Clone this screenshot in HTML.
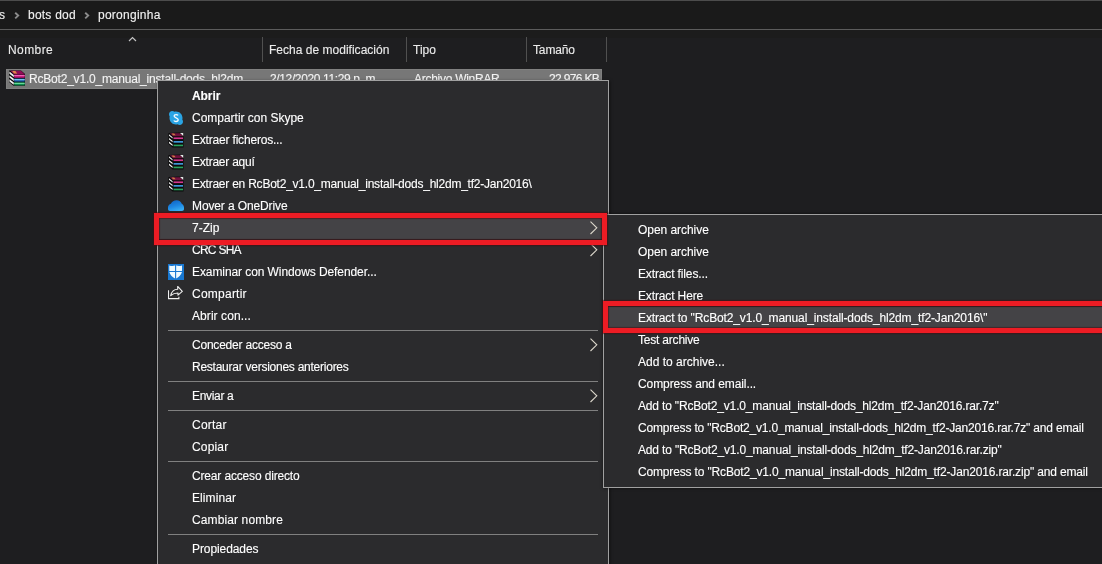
<!DOCTYPE html>
<html><head><meta charset="utf-8">
<style>
*{margin:0;padding:0;box-sizing:border-box}
html,body{width:1102px;height:564px;overflow:hidden;background:#1e1e20}
body{position:relative;font-family:"Liberation Sans",sans-serif;font-size:12px;color:#fff}
.abs{position:absolute}
.t{display:inline-block;white-space:pre;transform-origin:0 50%;-webkit-text-stroke:0.12px currentColor;will-change:transform}
.txt{position:absolute;line-height:14px;white-space:pre}
#topline{left:0;top:0;width:1102px;height:1px;background:#4c4c4c}
#addr{left:0;top:1px;width:1102px;height:28px;background:#1a1a1a}
#addrline{left:0;top:29px;width:1102px;height:1px;background:#5c5c5c}
#hdrband{left:0;top:30px;width:1102px;height:8px;background:#1c1c1c}
.bc{color:#f2f2f2}
.bchev{position:absolute;top:11px}
.colsep{position:absolute;top:37px;width:1px;height:25px;background:#505050}
.hdr{color:#ebebeb}
#filerow{left:6px;top:69px;width:596px;height:20px;background:#777777;border:1px solid #808080}
.ftxt{color:#f4f4f4}
#menu{left:157px;top:80px;width:452px;height:500px;background:#2b2b2d;border:1px solid #a0a0a0;box-shadow:1px 1px 3px rgba(0,0,0,.5)}
#sub{left:603px;top:214px;width:520px;height:274px;background:#2b2b2d;border:1px solid #a0a0a0;box-shadow:0 0 3px rgba(0,0,0,.6)}
.row,.srow{position:absolute;left:0;height:22px;width:100%}
.row .lbl{position:absolute;left:34px;top:0;line-height:22px;white-space:pre}
.srow .lbl{position:absolute;left:34px;top:0;line-height:22px;white-space:pre}
.ic{position:absolute;left:10px;top:3px}
.chev{position:absolute;left:430px;top:3px}
.sep{position:absolute;left:10px;width:430px;height:1px;background:#808080}
.hover{position:absolute;background:#444346}
.red{position:absolute;border:5px solid #ed1c24;box-shadow:0 0 1px 1px rgba(70,12,16,.55),inset 0 0 1px 1px rgba(70,12,16,.55)}
</style></head><body>
<div id="topline" class="abs"></div>
<div id="addr" class="abs"></div>
<div id="addrline" class="abs"></div>
<div id="hdrband" class="abs"></div>

<div class="txt bc" style="left:-1px;top:8px"><span class="t">s</span></div>
<svg class="bchev" style="left:12.5px" width="8" height="10" viewBox="0 0 8 10"><path d="M2.2 1.8 L5.2 4.6 L2.2 7.4" fill="none" stroke="#8c8c8c" stroke-width="1.9"/></svg>
<div class="txt bc" style="left:27.8px;top:8px"><span class="t" style="letter-spacing:0.222px">bots dod</span></div>
<svg class="bchev" style="left:82.6px" width="8" height="10" viewBox="0 0 8 10"><path d="M2.2 1.8 L5.2 4.6 L2.2 7.4" fill="none" stroke="#8c8c8c" stroke-width="1.9"/></svg>
<div class="txt bc" style="left:97.8px;top:8px"><span class="t" style="letter-spacing:0.260px">poronginha</span></div>

<svg style="position:absolute;left:128px;top:36px" width="10" height="7" viewBox="0 0 10 7"><path d="M1 5 L4.5 1.5 L8 5" fill="none" stroke="#c4c4c4" stroke-width="1.15"/></svg>
<div class="txt hdr" style="left:8.4px;top:43px"><span class="t" style="letter-spacing:0.423px">Nombre</span></div>
<div class="colsep" style="left:262px"></div>
<div class="txt hdr" style="left:268.8px;top:43px"><span class="t" style="letter-spacing:0.016px">Fecha de modificación</span></div>
<div class="colsep" style="left:406px"></div>
<div class="txt hdr" style="left:413.3px;top:43px"><span class="t">Tipo</span></div>
<div class="colsep" style="left:526px"></div>
<div class="txt hdr" style="left:533px;top:43px"><span class="t" style="letter-spacing:-0.141px">Tamaño</span></div>
<div class="colsep" style="left:606px"></div>

<div id="filerow" class="abs"></div>
<svg width="16" height="16" viewBox="0 0 16 16" style="position:absolute;left:9px;top:70px">
<path d="M0 0.6 L12 0.4 L16 4 L16 15.8 L4.5 15.8 L0 12 Z" fill="#0c0c0c"/>
<path d="M1.2 0.8 L12 0.8 L15.5 4.3 L5 4.3 Z" fill="#900c56"/>
<path d="M3.2 1 L6.4 1 L8.2 3.4 L5 3.4 Z" fill="#e08848"/>
<rect x="5.2" y="4.6" width="10.5" height="3.2" fill="#b81470"/><rect x="5.2" y="5" width="10.5" height="1.2" fill="#f060b8"/>
<rect x="5.2" y="8.6" width="10.5" height="3" fill="#1e5fae"/><rect x="5.2" y="9" width="10.5" height="1.2" fill="#78c0f0"/>
<rect x="5.2" y="12.4" width="10.5" height="3" fill="#0e8c4e"/><rect x="5.2" y="12.8" width="10.5" height="1.2" fill="#68d898"/>
<path d="M0.4 1.4 L4.8 5 L4.8 7.2 L0.4 3.8 Z M0.4 5.4 L4.8 8.8 L4.8 11 L0.4 7.6 Z M0.4 9.3 L4.8 12.6 L4.8 14.8 L0.4 11.4 Z" fill="#f2f2f2"/>
</svg>
<div class="txt ftxt" style="left:29.2px;top:72px"><span class="t" style="letter-spacing:-0.202px">RcBot2_v1.0_manual_install-dods_hl2dm</span></div>
<div class="txt ftxt" style="left:270px;top:72px"><span class="t" style="letter-spacing:-0.364px">2/12/2020 11:29 p. m.</span></div>
<div class="txt ftxt" style="left:414.4px;top:72px"><span class="t" style="letter-spacing:-0.274px">Archivo WinRAR</span></div>
<div class="txt ftxt" style="left:549px;top:72px"><span class="t" style="letter-spacing:-0.656px">22.976 KB</span></div>

<div id="menu" class="abs">
<div class="hover" style="left:0;top:136px;width:450px;height:22px"></div>
<div class="row" style="top:4px"><div class="lbl"><span class="t" style="font-weight:bold;letter-spacing:-0.068px">Abrir</span></div></div>
<div class="row" style="top:26px"><svg class="ic" width="16" height="16" viewBox="0 0 16 16" style="top:3px"><path d="M4.2 1 C5.2 1 5.9 1.3 6.5 1.7 C7 1.6 7.5 1.5 8 1.5 C11.6 1.5 14.5 4.4 14.5 8 C14.5 8.5 14.4 9 14.3 9.5 C14.7 10.1 15 10.9 15 11.7 C15 13.5 13.5 15 11.7 15 C10.9 15 10.1 14.7 9.5 14.3 C9 14.4 8.5 14.5 8 14.5 C4.4 14.5 1.5 11.6 1.5 8 C1.5 7.5 1.6 7 1.7 6.5 C1.3 5.9 1 5.2 1 4.2 C1 2.4 2.4 1 4.2 1 Z" fill="#2aa4e4"/><path d="M10.1 5.4 C9.7 4.9 9 4.6 8.1 4.6 C6.9 4.6 6.1 5.2 6.1 6.1 C6.1 8.1 10.2 7.6 10.2 9.8 C10.2 10.8 9.3 11.5 8 11.5 C7 11.5 6.2 11.1 5.8 10.5" fill="none" stroke="#f4fbff" stroke-width="1.3"/></svg><div class="lbl"><span class="t" style="letter-spacing:-0.014px">Compartir con Skype</span></div></div>
<div class="row" style="top:48px"><svg class="ic" width="16" height="16" viewBox="0 0 16 16">
<path d="M0.5 1 L12 0.6 L15.5 3.8 L15.5 15.5 L4.5 15.5 L0.5 12 Z" fill="#0a0a0a"/>
<path d="M1.8 1.2 L11.8 1.2 L15 4.2 L5 4.2 Z" fill="#70103e"/>
<path d="M3.6 1.4 L6.2 1.4 L7.6 3.2 L5 3.2 Z" fill="#c87a40"/>
<path d="M12 1 L15.2 1 L15.2 4 Z" fill="#e8e8e8"/>
<rect x="5.5" y="5.4" width="9.5" height="1.7" fill="#d2368e"/>
<rect x="5.5" y="9.0" width="9.5" height="1.7" fill="#3e96d8"/>
<rect x="5.5" y="12.6" width="9.5" height="1.7" fill="#2aa35e"/>
<path d="M1 2.2 L4.6 5.2 L4.6 6.6 L1 3.8 Z M1 5.9 L4.6 8.8 L4.6 10.3 L1 7.5 Z M1 9.6 L4.6 12.4 L4.6 14 L1 11.2 Z" fill="#f0f0f0"/>
</svg><div class="lbl"><span class="t" style="letter-spacing:-0.191px">Extraer ficheros...</span></div></div>
<div class="row" style="top:70px"><svg class="ic" width="16" height="16" viewBox="0 0 16 16">
<path d="M0.5 1 L12 0.6 L15.5 3.8 L15.5 15.5 L4.5 15.5 L0.5 12 Z" fill="#0a0a0a"/>
<path d="M1.8 1.2 L11.8 1.2 L15 4.2 L5 4.2 Z" fill="#70103e"/>
<path d="M3.6 1.4 L6.2 1.4 L7.6 3.2 L5 3.2 Z" fill="#c87a40"/>
<path d="M12 1 L15.2 1 L15.2 4 Z" fill="#e8e8e8"/>
<rect x="5.5" y="5.4" width="9.5" height="1.7" fill="#d2368e"/>
<rect x="5.5" y="9.0" width="9.5" height="1.7" fill="#3e96d8"/>
<rect x="5.5" y="12.6" width="9.5" height="1.7" fill="#2aa35e"/>
<path d="M1 2.2 L4.6 5.2 L4.6 6.6 L1 3.8 Z M1 5.9 L4.6 8.8 L4.6 10.3 L1 7.5 Z M1 9.6 L4.6 12.4 L4.6 14 L1 11.2 Z" fill="#f0f0f0"/>
</svg><div class="lbl"><span class="t" style="letter-spacing:-0.234px">Extraer aquí</span></div></div>
<div class="row" style="top:92px"><svg class="ic" width="16" height="16" viewBox="0 0 16 16">
<path d="M0.5 1 L12 0.6 L15.5 3.8 L15.5 15.5 L4.5 15.5 L0.5 12 Z" fill="#0a0a0a"/>
<path d="M1.8 1.2 L11.8 1.2 L15 4.2 L5 4.2 Z" fill="#70103e"/>
<path d="M3.6 1.4 L6.2 1.4 L7.6 3.2 L5 3.2 Z" fill="#c87a40"/>
<path d="M12 1 L15.2 1 L15.2 4 Z" fill="#e8e8e8"/>
<rect x="5.5" y="5.4" width="9.5" height="1.7" fill="#d2368e"/>
<rect x="5.5" y="9.0" width="9.5" height="1.7" fill="#3e96d8"/>
<rect x="5.5" y="12.6" width="9.5" height="1.7" fill="#2aa35e"/>
<path d="M1 2.2 L4.6 5.2 L4.6 6.6 L1 3.8 Z M1 5.9 L4.6 8.8 L4.6 10.3 L1 7.5 Z M1 9.6 L4.6 12.4 L4.6 14 L1 11.2 Z" fill="#f0f0f0"/>
</svg><div class="lbl"><span class="t" style="letter-spacing:-0.229px">Extraer en RcBot2_v1.0_manual_install-dods_hl2dm_tf2-Jan2016\</span></div></div>
<div class="row" style="top:114px"><svg class="ic" width="16" height="16" viewBox="0 0 16 16"><defs><linearGradient id="odg" x1="0.2" y1="0" x2="0.6" y2="1"><stop offset="0" stop-color="#0f63c4"/><stop offset="0.55" stop-color="#1d86e2"/><stop offset="1" stop-color="#38aef4"/></linearGradient></defs><path d="M2 13 C0.8 13 0 12.2 0 11 V9.6 C0 7.8 1.1 6.3 2.9 5.8 C3.9 3.6 6 2.2 8.6 2.2 C11.1 2.2 13.1 3.7 13.9 5.9 C15.3 6.5 16 7.9 16 9.5 V11 C16 12.2 15.2 13 14 13 Z" fill="url(#odg)"/></svg><div class="lbl"><span class="t" style="letter-spacing:-0.118px">Mover a OneDrive</span></div></div>
<div class="row" style="top:136px"><svg class="chev" width="10" height="16" viewBox="0 0 10 16"><path d="M2.5 1.6 L8.8 7.8 L2.5 14" fill="none" stroke="#dcd8cc" stroke-width="1.1"/></svg><div class="lbl"><span class="t">7-Zip</span></div></div>
<div class="row" style="top:158px"><svg class="chev" width="10" height="16" viewBox="0 0 10 16"><path d="M2.5 1.6 L8.8 7.8 L2.5 14" fill="none" stroke="#dcd8cc" stroke-width="1.1"/></svg><div class="lbl"><span class="t" style="letter-spacing:-0.736px">CRC SHA</span></div></div>
<div class="row" style="top:180px"><svg class="ic" width="16" height="16" viewBox="0 0 16 16"><rect x="0" y="0" width="16" height="16" fill="#1878d2"/><path d="M1.3 1.4 Q4.5 2.6 7.6 1.2 Q10.7 2.6 14 1.4 V8 Q12.5 12.5 7.6 14.8 Q2.7 12.5 1.3 8 Z" fill="#eefaff"/><path d="M7.6 1 V15 M1 7.5 H14.5" stroke="#1878d2" stroke-width="1.1"/></svg><div class="lbl"><span class="t" style="letter-spacing:-0.085px">Examinar con Windows Defender...</span></div></div>
<div class="row" style="top:202px"><svg class="ic" width="16" height="16" viewBox="0 0 16 16"><path d="M0.5 4.2 V12.6 H10.9 V10.8" fill="none" stroke="#f0f0f0" stroke-width="1.1"/><path d="M2.7 9.6 C3.5 6 5.5 3.2 9.7 3.2 V0.4 L14.3 5.4 L10 9.1 V7 C7 7 4.5 8 2.7 9.6 Z" fill="none" stroke="#f0f0f0" stroke-width="1.1" stroke-linejoin="round"/></svg><div class="lbl"><span class="t" style="letter-spacing:0.239px">Compartir</span></div></div>
<div class="row" style="top:224px"><div class="lbl"><span class="t" style="letter-spacing:0.070px">Abrir con...</span></div></div>
<div class="sep" style="top:249px"></div>
<div class="row" style="top:253px"><svg class="chev" width="10" height="16" viewBox="0 0 10 16"><path d="M2.5 1.6 L8.8 7.8 L2.5 14" fill="none" stroke="#dcd8cc" stroke-width="1.1"/></svg><div class="lbl"><span class="t" style="letter-spacing:-0.213px">Conceder acceso a</span></div></div>
<div class="row" style="top:275px"><div class="lbl"><span class="t" style="letter-spacing:-0.251px">Restaurar versiones anteriores</span></div></div>
<div class="sep" style="top:300px"></div>
<div class="row" style="top:304px"><svg class="chev" width="10" height="16" viewBox="0 0 10 16"><path d="M2.5 1.6 L8.8 7.8 L2.5 14" fill="none" stroke="#dcd8cc" stroke-width="1.1"/></svg><div class="lbl"><span class="t" style="letter-spacing:-0.319px">Enviar a</span></div></div>
<div class="sep" style="top:329px"></div>
<div class="row" style="top:333px"><div class="lbl"><span class="t" style="letter-spacing:0.231px">Cortar</span></div></div>
<div class="row" style="top:355px"><div class="lbl"><span class="t" style="letter-spacing:0.168px">Copiar</span></div></div>
<div class="sep" style="top:380px"></div>
<div class="row" style="top:384px"><div class="lbl"><span class="t" style="letter-spacing:-0.159px">Crear acceso directo</span></div></div>
<div class="row" style="top:406px"><div class="lbl"><span class="t" style="letter-spacing:0.094px">Eliminar</span></div></div>
<div class="row" style="top:428px"><div class="lbl"><span class="t" style="letter-spacing:0.117px">Cambiar nombre</span></div></div>
<div class="sep" style="top:453px"></div>
<div class="row" style="top:457px"><div class="lbl"><span class="t" style="letter-spacing:-0.089px">Propiedades</span></div></div>
</div>

<div id="sub" class="abs">
<div class="hover" style="left:0;top:92px;width:518px;height:22px"></div>
<div class="srow" style="top:4px"><div class="lbl"><span class="t" style="letter-spacing:-0.052px">Open archive</span></div></div>
<div class="srow" style="top:26px"><div class="lbl"><span class="t" style="letter-spacing:-0.052px">Open archive</span></div></div>
<div class="srow" style="top:48px"><div class="lbl"><span class="t" style="letter-spacing:-0.135px">Extract files...</span></div></div>
<div class="srow" style="top:70px"><div class="lbl"><span class="t" style="letter-spacing:-0.135px">Extract Here</span></div></div>
<div class="srow" style="top:92px"><div class="lbl"><span class="t" style="letter-spacing:-0.128px">Extract to "RcBot2_v1.0_manual_install-dods_hl2dm_tf2-Jan2016\"</span></div></div>
<div class="srow" style="top:114px"><div class="lbl"><span class="t" style="letter-spacing:-0.203px">Test archive</span></div></div>
<div class="srow" style="top:136px"><div class="lbl"><span class="t" style="letter-spacing:0.005px">Add to archive...</span></div></div>
<div class="srow" style="top:158px"><div class="lbl"><span class="t" style="letter-spacing:-0.092px">Compress and email...</span></div></div>
<div class="srow" style="top:180px"><div class="lbl"><span class="t" style="letter-spacing:-0.168px">Add to "RcBot2_v1.0_manual_install-dods_hl2dm_tf2-Jan2016.rar.7z"</span></div></div>
<div class="srow" style="top:202px"><div class="lbl"><span class="t" style="letter-spacing:-0.180px">Compress to "RcBot2_v1.0_manual_install-dods_hl2dm_tf2-Jan2016.rar.7z" and email</span></div></div>
<div class="srow" style="top:224px"><div class="lbl"><span class="t" style="letter-spacing:-0.158px">Add to "RcBot2_v1.0_manual_install-dods_hl2dm_tf2-Jan2016.rar.zip"</span></div></div>
<div class="srow" style="top:246px"><div class="lbl"><span class="t" style="letter-spacing:-0.160px">Compress to "RcBot2_v1.0_manual_install-dods_hl2dm_tf2-Jan2016.rar.zip" and email</span></div></div>
</div>

<div class="red" style="left:154px;top:213px;width:453px;height:32px"></div>
<div class="red" style="left:603px;top:301px;width:520px;height:32px"></div>
</body></html>
